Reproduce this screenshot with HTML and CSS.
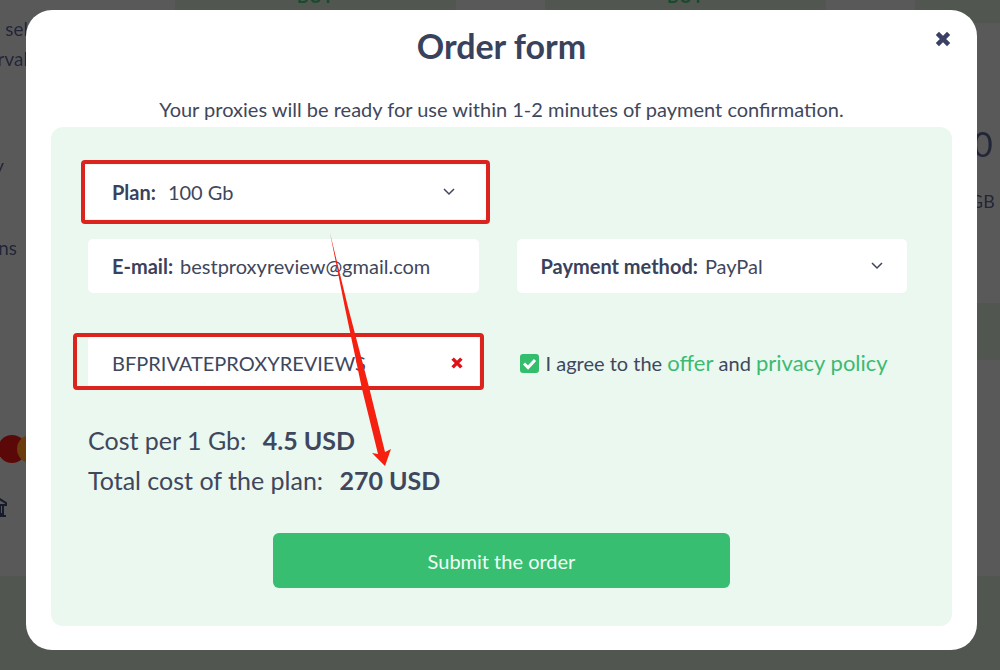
FILE: index.html
```
<!DOCTYPE html>
<html lang="en">

<head>
    <meta charset="UTF-8">
    <meta name="viewport" content="width=device-width, initial-scale=1.0">
    <title>Order form</title>
    <link rel="stylesheet" href="styles.css">
</head>

<body>
    <!-- page behind the popup -->
    <div class="page" aria-hidden="true">
        <div class="top-cards">
            <div class="top-card">BUY</div>
            <div class="top-card">BUY</div>
            <div class="top-card"></div>
        </div>
        <div class="side side-left">
            <p class="side-lines">sel<br>rval</p>
            <p class="side-y">y</p>
            <p class="side-ns">ns</p>
            <svg class="pay-logo" width="44" height="28" viewBox="0 0 44 28">
                <circle cx="12" cy="14" r="14" fill="#5a0808" />
                <circle cx="31" cy="14" r="14" fill="#6b3d0c" />
            </svg>
            <svg class="bank-icon" width="18" height="20" viewBox="0 0 18 20" fill="none" stroke="#171b2b" stroke-width="2">
                <path d="M1 6 9 1 17 6V8H1zM3 17H15M1 19H17M4 8V17M8 8V17M11 8V17M14 8V17" />
            </svg>
        </div>
        <div class="side side-right">
            <p class="side-price">0</p>
            <p class="side-unit">GB</p>
            <div class="side-card"></div>
        </div>
        <div class="page-footer"></div>
    </div>

    <div class="modal" role="dialog" aria-labelledby="title">
        <button class="close" type="button" aria-label="Close">
            <svg width="18" height="18" viewBox="0 0 16 16">
                <path d="M3 3 13 13M13 3 3 13" />
            </svg>
        </button>
        <h1 id="title">Order form</h1>
        <p class="note">Your proxies will be ready for use within 1-2 minutes of payment confirmation.</p>

        <form class="panel">
            <div class="fields">
                <div class="field plan">
                    <label for="plan">Plan:</label>
                    <select id="plan">
                        <option>100 Gb</option>
                    </select>
                    <svg class="chevron" width="12" height="8" viewBox="0 0 12 8">
                        <path d="M1 1 6 6 11 1" />
                    </svg>
                </div>
                <div class="field email">
                    <label for="email">E-mail:</label>
                    <input id="email" type="email" value="bestproxyreview@gmail.com">
                </div>
                <div class="field payment">
                    <label for="payment">Payment method:</label>
                    <select id="payment">
                        <option>PayPal</option>
                    </select>
                    <svg class="chevron" width="12" height="8" viewBox="0 0 12 8">
                        <path d="M1 1 6 6 11 1" />
                    </svg>
                </div>
            </div>

            <div class="fields">
                <div class="field coupon">
                    <input type="text" aria-label="Promo code" value="BFPRIVATEPROXYREVIEWS">
                    <button class="clear" type="button" aria-label="Remove promo code">
                        <svg width="14" height="14" viewBox="0 0 16 16">
                            <path d="M3 3 13 13M13 3 3 13" />
                        </svg>
                    </button>
                </div>
                <div class="agree">
                    <input id="agree" type="checkbox" checked>
                    <label for="agree">I agree to the <a href="#">offer</a> and <a href="#">privacy policy</a></label>
                </div>
            </div>

            <div class="costs">
                <p>Cost per 1 Gb: <b>4.5 USD</b></p>
                <p>Total cost of the plan: <b>270 USD</b></p>
            </div>

            <button class="submit" type="submit">Submit the order</button>

            <!-- arrow from the plan to the total -->
            <svg class="arrow" width="64" height="236" viewBox="0 0 64 236">
                <path d="M2 1 20 75 41 155 57 220 63 217 57 234 44 221 50 222 34 157 17 76z" />
            </svg>
        </form>
    </div>
</body>

</html>
```

FILE: styles.css
```
* {
    box-sizing: border-box;
    margin: 0;
    padding: 0;
}

body {
    min-height: 100vh;
    padding: 10px 23px 20px 26px;
    background-color: #595959;
    color: #40475c;
    font-family: Lato, "Liberation Sans", sans-serif;
    font-size: 20px;
    line-height: 24px;
}

input,
select,
button {
    font: inherit;
    color: inherit;
    border: none;
    background: none;
    outline: none;
}

/* page behind */
.page {
    position: fixed;
    inset: 0;
    overflow: hidden;
    color: #232638;
}

.top-cards {
    display: grid;
    grid-template-columns: repeat(3, 281px);
    gap: 89px;
    height: 27px;
    margin-top: -4px;
    padding-left: 175px;
}

.top-card {
    background-color: #515651;
    color: #194a2d;
    font-size: 18px;
    font-weight: bold;
    line-height: 0;
    text-align: center;
}

.side {
    position: absolute;
    top: 0;
    bottom: 0;
    display: flex;
    flex-direction: column;
}

.side-left {
    left: 0;
    width: 28px;
    align-items: flex-end;
    font-size: 19px;
}

.side-lines {
    padding-top: 14px;
    line-height: 30px;
    text-align: right;
}

.side-y {
    padding: 80px 24px 0 0;
}

.side-ns {
    padding: 58px 11px 0 0;
}

.pay-logo {
    flex-shrink: 0;
    margin: 175px -16px 0 0;
}

.bank-icon {
    flex-shrink: 0;
    margin: 34px 21px 0 0;
}

.side-right {
    right: 0;
    width: 25px;
}

.side-price {
    padding-top: 124px;
    font-size: 34px;
    line-height: 40px;
    margin-left: -2px;
}

.side-unit {
    padding-top: 25px;
    font-size: 18px;
    margin-left: -5px;
}

.side-card {
    height: 57px;
    margin-top: 90px;
    background-color: #515651;
}

.page-footer {
    position: absolute;
    inset: auto 0 0;
    height: 94px;
    background-color: #515651;
}

/* popup */
.modal {
    position: relative;
    padding: 15px 25px 24px;
    border-radius: 26px;
    background-color: #fff;
}

h1 {
    color: #39425d;
    font-size: 34px;
    font-weight: bold;
    line-height: 42px;
    text-align: center;
}

.note {
    margin: 30px 0 6px;
    text-align: center;
}

.close {
    position: absolute;
    top: 20px;
    right: 25px;
    cursor: pointer;
}

.close svg,
.clear svg {
    display: block;
    fill: none;
    stroke: #3a4066;
    stroke-width: 4;
}

.panel {
    position: relative;
    padding: 38px 37px;
    border-radius: 12px;
    background-color: #eaf8f0;
}

.fields {
    display: grid;
    grid-template-columns: 1fr 1fr;
    grid-auto-rows: 54px;
    gap: 20px 38px;
    padding-right: 8px;
}

.fields + .fields {
    margin-top: 43px;
}

.field {
    position: relative;
    display: flex;
    align-items: center;
    gap: 7px;
    padding: 0 24px;
    border-radius: 5px;
    background-color: #fff;
}

.field label {
    color: #39425d;
    font-weight: bold;
}

.field input,
.field select {
    flex: 1;
    min-width: 0;
    height: 52px;
    appearance: none;
}

.plan {
    grid-column: 1;
    gap: 12px;
    box-shadow: -4px 0 #fff, 7px 0 #fbfefc;
}

.email,
.payment {
    grid-row: 2;
}

/* red frames */
.plan::after,
.coupon::after {
    content: "";
    position: absolute;
    border: 4px solid #dc241f;
    border-radius: 4px;
    pointer-events: none;
}

.plan::after {
    inset: -5px -11px -5px -7px;
}

.coupon::after {
    inset: -3px -5px 0 -15px;
}

.chevron {
    flex-shrink: 0;
    fill: none;
    stroke: #40475c;
    stroke-width: 1.5;
    pointer-events: none;
}

.clear {
    margin-right: -9px;
    cursor: pointer;
}

.clear svg {
    stroke: #e01219;
}

.agree {
    display: flex;
    align-items: center;
    gap: 7px;
    padding-left: 3px;
}

.agree input {
    width: 19px;
    height: 19px;
    border-radius: 3px;
    appearance: none;
    background: #33bd6d url("data:image/svg+xml,%3Csvg xmlns='http://www.w3.org/2000/svg' viewBox='0 0 19 19'%3E%3Cpath d='M4 9.5 8 13.5 15 6' fill='none' stroke='white' stroke-width='3'/%3E%3C/svg%3E");
}

a {
    color: #3dba72;
    font-size: 22px;
    text-decoration: none;
}

.costs {
    margin-top: 30px;
    font-size: 25px;
    line-height: 40px;
}

.costs b {
    margin-left: 10px;
    font-weight: bold;
}

.submit {
    display: block;
    width: 457px;
    max-width: 100%;
    height: 55px;
    margin: 33px auto 0;
    border-radius: 6px;
    background-color: #37be70;
    color: #f0fff5;
    cursor: pointer;
}

.arrow {
    position: absolute;
    top: 105px;
    left: 277px;
    fill: #f5200f;
    pointer-events: none;
}
```
